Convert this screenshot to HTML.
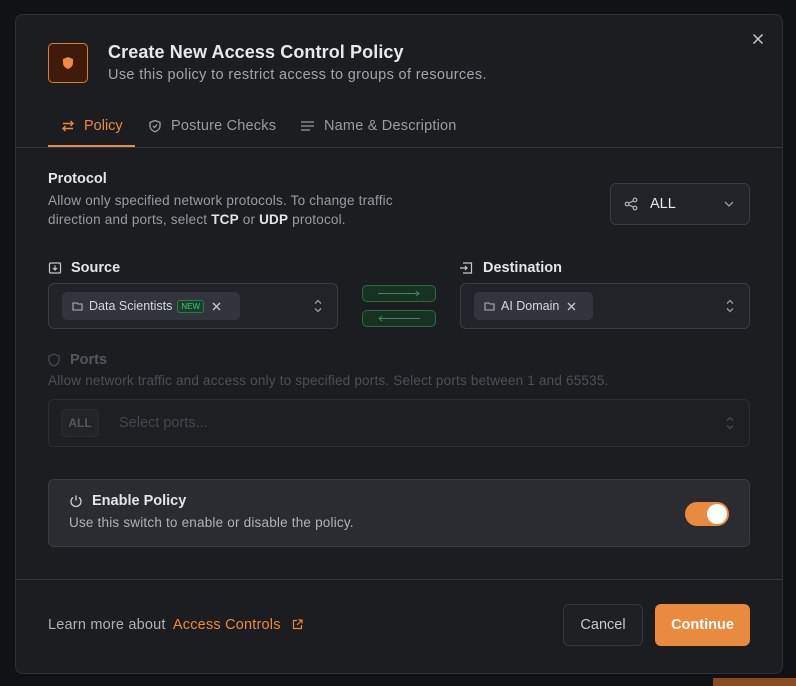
<!DOCTYPE html><html><head><style>
*{box-sizing:border-box;margin:0;padding:0}
body{width:796px;height:686px;background:#111215;font-family:"Liberation Sans",sans-serif;position:relative;overflow:hidden;color:#e4e5e7}
.m{position:absolute;left:15px;top:14px;width:768px;height:660px;background:#1c1d21;border:1px solid #2e3036;border-radius:8px}
.a{position:absolute}
.t{font-size:18px;font-weight:bold;color:#e8e9eb}
.s{font-size:13.5px;color:#9a9ca2;letter-spacing:.2px}
.box{position:absolute;border:1px solid #3a3c43;border-radius:6px;background:#222328}
.chip{position:absolute;background:#33353c;border-radius:5px;height:28px;top:8px;left:13px;font-size:12.5px;color:#d7d8db;display:flex;align-items:center;padding:0 10px;gap:5px}
svg{display:block}
</style></head><body>
<div class="a" style="left:713px;top:678px;width:83px;height:8px;background:#8a4b1e"></div>
<div class="m"></div>
<div class="a" style="left:48px;top:43px;width:40px;height:40px;border:1px solid #e07b32;border-radius:5px;background:#3f1b0b"></div>
<svg class="a" style="left:61px;top:56px" width="14" height="14" viewBox="0 0 14 14"><path d="M7 1L12 3V7C12 10 9.5 12 7 13C4.5 12 2 10 2 7V3Z" fill="#f08a3c"/></svg>
<div class="a t" style="left:108px;top:42px;letter-spacing:.1px">Create New Access Control Policy</div>
<div class="a" style="left:108px;top:67px;font-size:14.5px;color:#a3a5ab;letter-spacing:.35px">Use this policy to restrict access to groups of resources.</div>
<svg class="a" style="left:752px;top:33px" width="12" height="12" viewBox="0 0 12 12" stroke="#c8c9cc" stroke-width="1.5"><path d="M1.5 1.5L10.5 10.5M10.5 1.5L1.5 10.5"/></svg>
<div class="a" style="left:16px;top:147px;width:766px;height:1px;background:#34363c"></div>
<div class="a" style="left:48px;top:145px;width:87px;height:2px;background:#e98a3e"></div>
<svg class="a" style="left:61px;top:119px" width="14" height="14" viewBox="0 0 14 14" fill="none" stroke="#e98a3e" stroke-width="1.4"><path d="M2 4.5H12M9.5 2L12 4.5 9.5 7M12 9.5H2M4.5 7L2 9.5 4.5 12"/></svg>
<div class="a" style="left:84px;top:118px;font-size:14.5px;color:#e98a3e">Policy</div>
<svg class="a" style="left:148px;top:119px" width="14" height="14" viewBox="0 0 14 14" fill="none" stroke="#9a9ca2" stroke-width="1.3"><path d="M7 1.5L12 3.5V7C12 10 9.5 11.8 7 12.8 4.5 11.8 2 10 2 7V3.5Z"/><path d="M5 7L6.5 8.5 9 5.5"/></svg>
<div class="a" style="left:171px;top:118px;font-size:14.5px;color:#9a9ca2;letter-spacing:.2px">Posture Checks</div>
<svg class="a" style="left:300px;top:120px" width="15" height="12" viewBox="0 0 15 12" stroke="#9a9ca2" stroke-width="1.3"><path d="M1 2H14M1 6H14M1 10H10"/></svg>
<div class="a" style="left:324px;top:118px;font-size:14.5px;color:#9a9ca2;letter-spacing:.2px">Name &amp; Description</div>

<div class="a" style="left:48px;top:171px;font-size:14.5px;font-weight:bold;color:#e4e5e7">Protocol</div>
<div class="a s" style="left:48px;top:191px;line-height:19px">Allow only specified network protocols. To change traffic<br>direction and ports, select <b style="color:#e4e5e7">TCP</b> or <b style="color:#e4e5e7">UDP</b> protocol.</div>
<div class="box" style="left:610px;top:183px;width:140px;height:42px">
<svg class="a" style="left:13px;top:13px" width="14" height="14" viewBox="0 0 14 14" fill="none" stroke="#b0b2b7" stroke-width="1.2"><circle cx="11" cy="3" r="1.8"/><circle cx="3" cy="7" r="1.8"/><circle cx="11" cy="11" r="1.8"/><path d="M4.6 6.1L9.4 3.9M4.6 7.9L9.4 10.1"/></svg>
<div class="a" style="left:39px;top:12px;font-size:14.5px;color:#e8e9eb">ALL</div>
<svg class="a" style="left:113px;top:16px" width="10" height="8" viewBox="0 0 10 8" fill="none" stroke="#9a9ca2" stroke-width="1.3"><path d="M1 2L5 6 9 2"/></svg></div>

<svg class="a" style="left:48px;top:261px" width="14" height="14" viewBox="0 0 14 14" fill="none" stroke="#c8c9cc" stroke-width="1.2"><rect x="1.5" y="2" width="11" height="10" rx="1"/><path d="M7 4.5V9M5 7L7 9 9 7"/></svg>
<div class="a" style="left:71px;top:260px;font-size:14.5px;font-weight:bold">Source</div>
<svg class="a" style="left:459px;top:261px" width="14" height="14" viewBox="0 0 14 14" fill="none" stroke="#c8c9cc" stroke-width="1.2"><path d="M4 2H12.5V12H4M1 7H8M6 5L8 7 6 9"/></svg>
<div class="a" style="left:483px;top:260px;font-size:14.5px;font-weight:bold">Destination</div>
<div class="box" style="left:48px;top:283px;width:290px;height:46px"><div class="chip" style="width:178px"><svg width="12" height="12" viewBox="0 0 12 12" fill="none" stroke="#b0b2b7" stroke-width="1.1"><path d="M1 3H5L6 4H10V10H1Z"/></svg>Data Scientists <span style="font-size:8px;color:#4ec27a;background:#16402a;border:1px solid #2b7a4a;border-radius:3px;padding:1px 3px">NEW</span> <svg width="9" height="9" viewBox="0 0 9 9" stroke="#c8c9cc" stroke-width="1.3" style="margin-left:3px"><path d="M1 1L8 8M8 1L1 8"/></svg></div>
<svg class="a" style="right:14px;top:14px" width="10" height="16" viewBox="0 0 10 16" fill="none" stroke="#9a9ca2" stroke-width="1.3"><path d="M2 5.5L5 2.5 8 5.5M2 10.5L5 13.5 8 10.5"/></svg></div>
<div class="a" style="left:362px;top:285px;width:74px;height:17px;border:1px solid #2a6b40;border-radius:5px;background:#173222"></div>
<div class="a" style="left:362px;top:310px;width:74px;height:17px;border:1px solid #2a6b40;border-radius:5px;background:#173222"></div>
<svg class="a" style="left:378px;top:289px" width="42" height="9" viewBox="0 0 42 9" fill="none" stroke="#3e8a58" stroke-width="1"><path d="M0 4.5H41M38 2L41 4.5 38 7"/></svg>
<svg class="a" style="left:378px;top:314px" width="42" height="9" viewBox="0 0 42 9" fill="none" stroke="#3e8a58" stroke-width="1"><path d="M1 4.5H42M4 2L1 4.5 4 7"/></svg>
<div class="box" style="left:460px;top:283px;width:290px;height:46px"><div class="chip" style="width:119px"><svg width="12" height="12" viewBox="0 0 12 12" fill="none" stroke="#b0b2b7" stroke-width="1.1"><path d="M1 3H5L6 4H10V10H1Z"/></svg>AI Domain <svg width="9" height="9" viewBox="0 0 9 9" stroke="#c8c9cc" stroke-width="1.3" style="margin-left:3px"><path d="M1 1L8 8M8 1L1 8"/></svg></div>
<svg class="a" style="right:14px;top:14px" width="10" height="16" viewBox="0 0 10 16" fill="none" stroke="#9a9ca2" stroke-width="1.3"><path d="M2 5.5L5 2.5 8 5.5M2 10.5L5 13.5 8 10.5"/></svg></div>

<svg class="a" style="left:48px;top:353px" width="12" height="14" viewBox="0 0 12 14" fill="none" stroke="#4a4c52" stroke-width="1.2"><path d="M6 1L11 3V7C11 10 8.5 12 6 13 3.5 12 1 10 1 7V3Z"/></svg>
<div class="a" style="left:70px;top:352px;font-size:14.5px;font-weight:bold;color:#55575d">Ports</div>
<div class="a s" style="left:48px;top:373px;color:#4d4f55">Allow network traffic and access only to specified ports. Select ports between 1 and 65535.</div>
<div class="box" style="left:48px;top:399px;width:702px;height:48px;background:#1e1f23;border-color:#2c2e33">
<div class="a" style="left:12px;top:9px;width:38px;height:28px;border:1px solid #2a2c31;border-radius:5px;background:#232428;font-size:12px;font-weight:bold;color:#55575d;text-align:center;line-height:26px">ALL</div>
<div class="a" style="left:70px;top:15px;font-size:14.5px;color:#45474d">Select ports...</div>
<svg class="a" style="right:14px;top:15px" width="10" height="16" viewBox="0 0 10 16" fill="none" stroke="#45474d" stroke-width="1.3"><path d="M2 5.5L5 2.5 8 5.5M2 10.5L5 13.5 8 10.5"/></svg></div>

<div class="box" style="left:48px;top:479px;width:702px;height:68px;background:#2a2c32;border-color:#3a3c43">
<svg class="a" style="left:20px;top:14px" width="14" height="14" viewBox="0 0 14 14" fill="none" stroke="#d0d1d4" stroke-width="1.3"><path d="M7 1.5V6.5M4 3.5A5 5 0 1 0 10 3.5"/></svg>
<div class="a" style="left:43px;top:13px;font-size:14.5px;font-weight:bold;color:#e4e5e7">Enable Policy</div>
<div class="a s" style="left:20px;top:35px;color:#b0b2b7">Use this switch to enable or disable the policy.</div>
<div class="a" style="left:636px;top:22px;width:44px;height:24px;border-radius:12px;background:#e98a3e"><div class="a" style="left:22px;top:2px;width:20px;height:20px;border-radius:10px;background:#fff"></div></div></div>

<div class="a" style="left:16px;top:579px;width:766px;height:1px;background:#34363c"></div>
<div class="a" style="left:48px;top:617px;font-size:14.5px;color:#b0b2b7;letter-spacing:.2px">Learn more about <span style="color:#e98a3e;margin-left:3px">Access Controls</span></div>
<svg class="a" style="left:292px;top:619px" width="11" height="11" viewBox="0 0 11 11" fill="none" stroke="#e98a3e" stroke-width="1.2"><path d="M5 1.5H1.5V9.5H9.5V6M6.5 1H10V4.5M10 1L5 6"/></svg>
<div class="a" style="left:563px;top:604px;width:80px;height:42px;border:1px solid #34363c;border-radius:6px;background:#1f2024;font-size:14.5px;color:#c8c9cc;text-align:center;line-height:40px">Cancel</div>
<div class="a" style="left:655px;top:604px;width:95px;height:42px;border-radius:6px;background:#e98a3e;font-size:14.5px;font-weight:bold;color:#fff;text-align:center;line-height:42px">Continue</div>
</body></html>
